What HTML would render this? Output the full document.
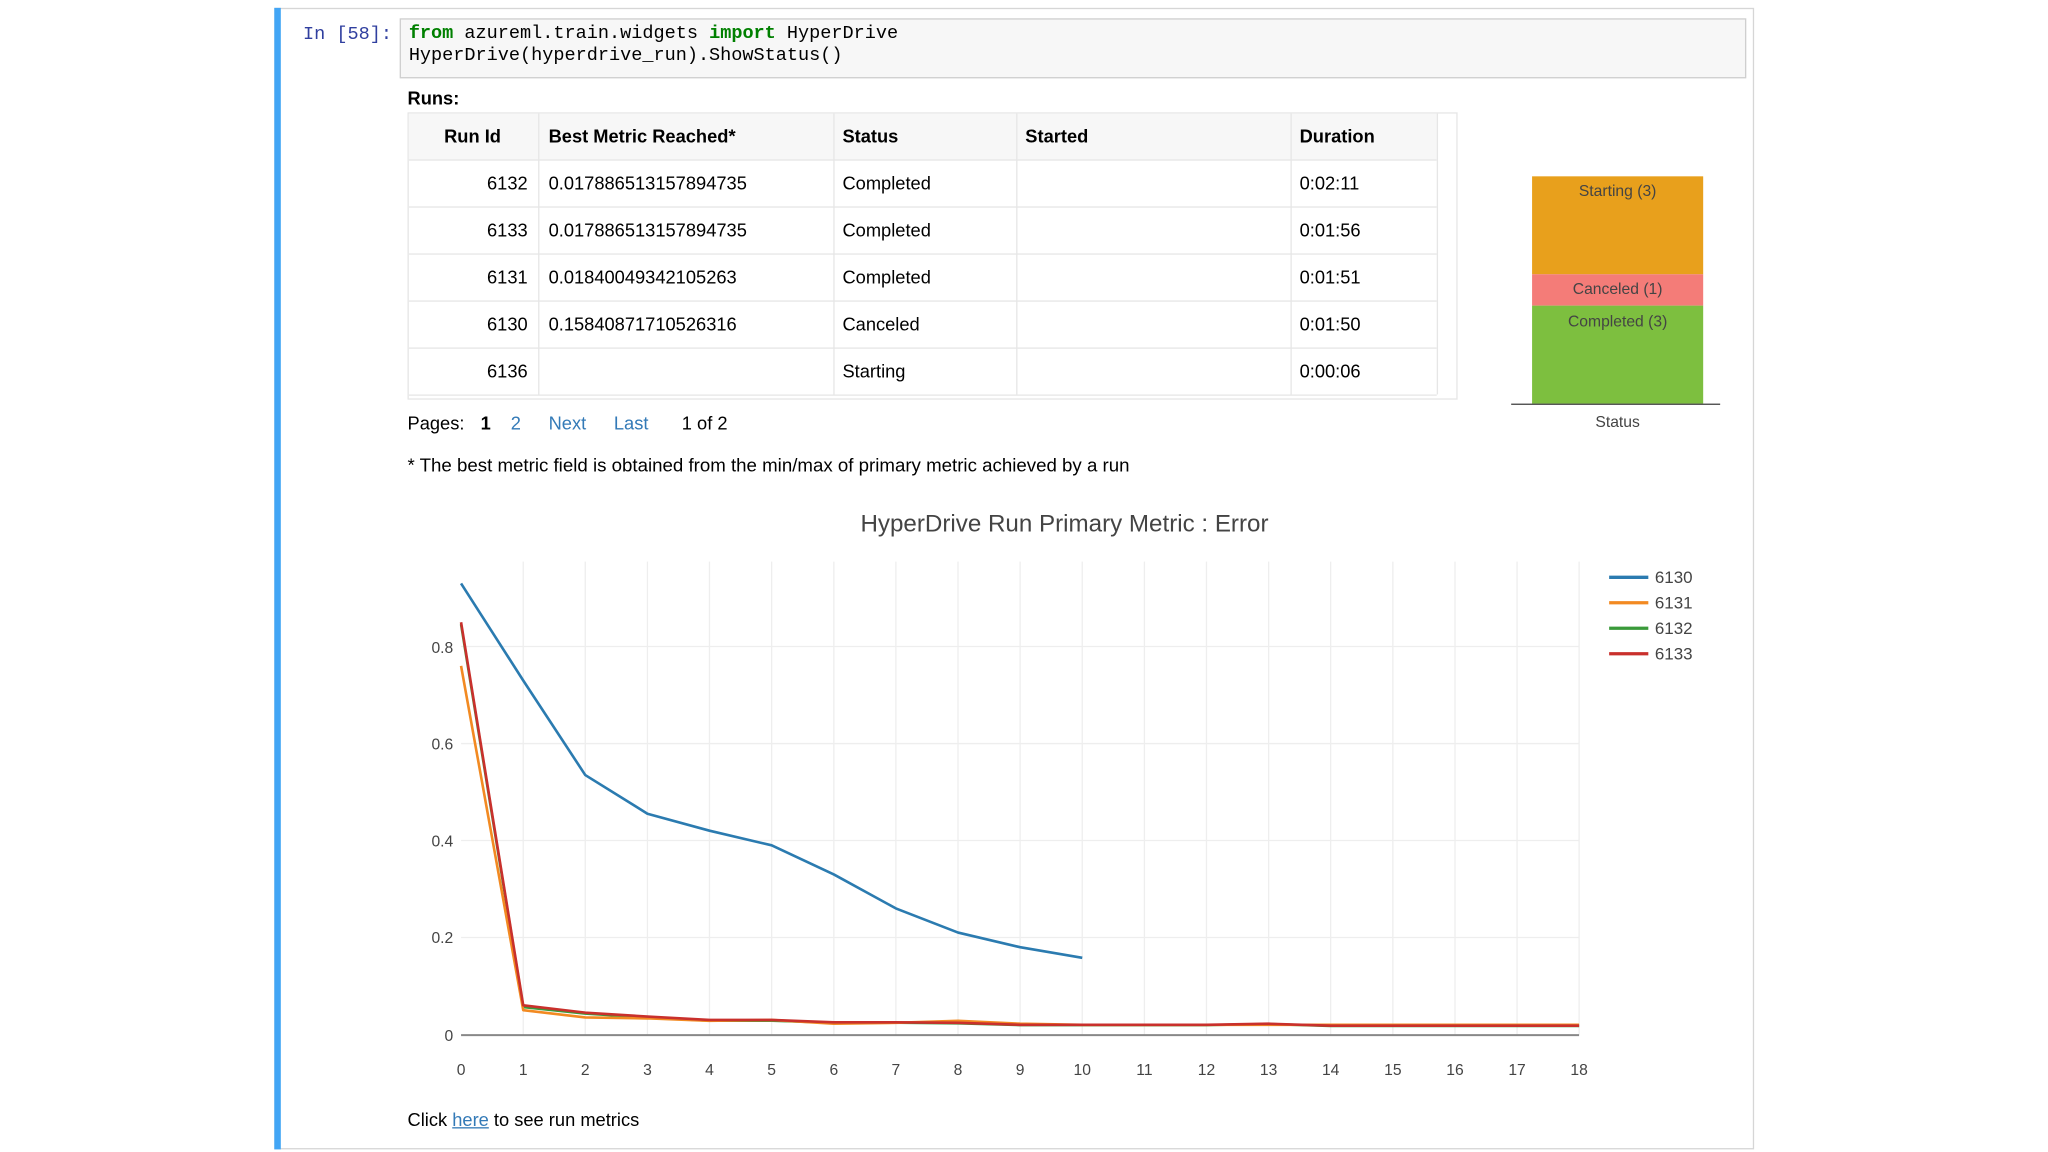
<!DOCTYPE html>
<html><head><meta charset="utf-8"><style>
html,body{margin:0;padding:0;background:#fff;width:2048px;height:1152px;overflow:hidden}
#s{position:absolute;left:0;top:0;width:1568px;height:882px;transform:scale(1.30612);transform-origin:0 0;font-family:"Liberation Sans",Arial,sans-serif;color:#000}
.a{position:absolute;white-space:nowrap}
.m{font-family:"Liberation Mono",monospace;font-size:14.2px}
.t{font-size:14px}
.hl{position:absolute;height:1px;background:#e6e6e6}
.vl{position:absolute;width:1px;background:#e6e6e6}
</style></head><body><div id="s">
<div class="a" style="left:210px;top:6px;width:1131px;height:872px;border:1px solid #d6d6d6"></div>
<div class="a" style="left:210px;top:6px;width:5px;height:874px;background:#42a5f5"></div>
<div class="a m" style="left:232px;top:19px;color:#303f9f">In [58]:</div>
<div class="a" style="left:306px;top:14px;width:1029px;height:44px;background:#f7f7f7;border:1px solid #cfcfcf"></div>
<div class="a m" style="left:313px;top:18px;line-height:17px">
<span style="color:#008000;font-weight:bold">from</span> azureml.train.widgets <span style="color:#008000;font-weight:bold">import</span> HyperDrive<br>HyperDrive(hyperdrive_run).ShowStatus()</div>
<div class="a t" style="left:312px;top:67px;font-weight:bold">Runs:</div>
<div class="a" style="left:312px;top:86px;width:802px;height:218px;border:1px solid #e6e6e6;background:#fff"></div>
<div class="a" style="left:313px;top:87px;width:787px;height:35px;background:#f7f7f7"></div>
<div class="hl" style="left:313px;top:122px;width:787px"></div>
<div class="hl" style="left:313px;top:158px;width:787px"></div>
<div class="hl" style="left:313px;top:194px;width:787px"></div>
<div class="hl" style="left:313px;top:230px;width:787px"></div>
<div class="hl" style="left:313px;top:266px;width:787px"></div>
<div class="hl" style="left:313px;top:302px;width:787px"></div>
<div class="vl" style="left:412px;top:87px;height:215px"></div>
<div class="vl" style="left:638px;top:87px;height:215px"></div>
<div class="vl" style="left:778px;top:87px;height:215px"></div>
<div class="vl" style="left:988px;top:87px;height:215px"></div>
<div class="vl" style="left:1100px;top:87px;height:215px"></div>
<div class="a t" style="left:340px;top:96px;font-weight:bold">Run Id</div>
<div class="a t" style="left:420px;top:96px;font-weight:bold">Best Metric Reached*</div>
<div class="a t" style="left:645px;top:96px;font-weight:bold">Status</div>
<div class="a t" style="left:785px;top:96px;font-weight:bold">Started</div>
<div class="a t" style="left:995px;top:96px;font-weight:bold">Duration</div>
<div class="a t" style="left:360px;width:44px;text-align:right;top:132px">6132</div>
<div class="a t" style="left:420px;top:132px">0.017886513157894735</div>
<div class="a t" style="left:645px;top:132px">Completed</div>
<div class="a t" style="left:995px;top:132px">0:02:11</div>
<div class="a t" style="left:360px;width:44px;text-align:right;top:168px">6133</div>
<div class="a t" style="left:420px;top:168px">0.017886513157894735</div>
<div class="a t" style="left:645px;top:168px">Completed</div>
<div class="a t" style="left:995px;top:168px">0:01:56</div>
<div class="a t" style="left:360px;width:44px;text-align:right;top:204px">6131</div>
<div class="a t" style="left:420px;top:204px">0.01840049342105263</div>
<div class="a t" style="left:645px;top:204px">Completed</div>
<div class="a t" style="left:995px;top:204px">0:01:51</div>
<div class="a t" style="left:360px;width:44px;text-align:right;top:240px">6130</div>
<div class="a t" style="left:420px;top:240px">0.15840871710526316</div>
<div class="a t" style="left:645px;top:240px">Canceled</div>
<div class="a t" style="left:995px;top:240px">0:01:50</div>
<div class="a t" style="left:360px;width:44px;text-align:right;top:276px">6136</div>
<div class="a t" style="left:645px;top:276px">Starting</div>
<div class="a t" style="left:995px;top:276px">0:00:06</div>
<div class="a t" style="left:312px;top:316px">Pages:</div>
<div class="a t" style="left:368px;top:316px;font-weight:bold">1</div>
<div class="a t" style="left:391px;top:316px;color:#337ab7">2</div>
<div class="a t" style="left:420px;top:316px;color:#337ab7">Next</div>
<div class="a t" style="left:470px;top:316px;color:#337ab7">Last</div>
<div class="a t" style="left:522px;top:316px">1 of 2</div>
<div class="a t" style="left:312px;top:349px;font-size:14.3px">* The best metric field is obtained from the min/max of primary metric achieved by a run</div>
<div class="a" style="left:1173px;top:135px;width:131px;height:75px;background:#e8a01c"></div>
<div class="a" style="left:1173px;top:210px;width:131px;height:24px;background:#f47c78"></div>
<div class="a" style="left:1173px;top:234px;width:131px;height:75px;background:#7dbf3f"></div>
<div class="a" style="left:1157px;top:309px;width:160px;height:1px;background:#444"></div>
<div class="a" style="left:1173px;width:131px;text-align:center;top:139px;font-size:12px;color:#444">Starting (3)</div>
<div class="a" style="left:1173px;width:131px;text-align:center;top:214px;font-size:12px;color:#444">Canceled (1)</div>
<div class="a" style="left:1173px;width:131px;text-align:center;top:239px;font-size:12px;color:#444">Completed (3)</div>
<div class="a" style="left:1173px;width:131px;text-align:center;top:316px;font-size:12px;color:#444">Status</div>
<svg class="a" style="left:0;top:0" width="1568" height="882" font-family="Liberation Sans, Arial, sans-serif">
<text x="815" y="407" text-anchor="middle" font-size="18.5" fill="#444">HyperDrive Run Primary Metric : Error</text>
<g stroke="#eeeeee" stroke-width="1">
<line x1="400.6" y1="430" x2="400.6" y2="792"/><line x1="448.1" y1="430" x2="448.1" y2="792"/><line x1="495.7" y1="430" x2="495.7" y2="792"/><line x1="543.2" y1="430" x2="543.2" y2="792"/><line x1="590.8" y1="430" x2="590.8" y2="792"/><line x1="638.4" y1="430" x2="638.4" y2="792"/><line x1="685.9" y1="430" x2="685.9" y2="792"/><line x1="733.5" y1="430" x2="733.5" y2="792"/><line x1="781" y1="430" x2="781" y2="792"/><line x1="828.6" y1="430" x2="828.6" y2="792"/><line x1="876.2" y1="430" x2="876.2" y2="792"/><line x1="923.7" y1="430" x2="923.7" y2="792"/><line x1="971.3" y1="430" x2="971.3" y2="792"/><line x1="1018.8" y1="430" x2="1018.8" y2="792"/><line x1="1066.4" y1="430" x2="1066.4" y2="792"/><line x1="1114" y1="430" x2="1114" y2="792"/><line x1="1161.5" y1="430" x2="1161.5" y2="792"/><line x1="1209" y1="430" x2="1209" y2="792"/>
<line x1="353" y1="495" x2="1209" y2="495"/><line x1="353" y1="569.3" x2="1209" y2="569.3"/><line x1="353" y1="643.5" x2="1209" y2="643.5"/><line x1="353" y1="717.8" x2="1209" y2="717.8"/>
</g>
<line x1="353" y1="792.5" x2="1209" y2="792.5" stroke="#888" stroke-width="1.5"/>
<g font-size="12" fill="#444" text-anchor="end">
<text x="347" y="797">0</text><text x="347" y="722">0.2</text><text x="347" y="648">0.4</text><text x="347" y="574">0.6</text><text x="347" y="500">0.8</text></g>
<g font-size="12" fill="#444" text-anchor="middle">
<text x="353" y="823">0</text><text x="400.6" y="823">1</text><text x="448.1" y="823">2</text><text x="495.7" y="823">3</text><text x="543.2" y="823">4</text><text x="590.8" y="823">5</text><text x="638.4" y="823">6</text><text x="685.9" y="823">7</text><text x="733.5" y="823">8</text><text x="781" y="823">9</text><text x="828.6" y="823">10</text><text x="876.2" y="823">11</text><text x="923.7" y="823">12</text><text x="971.3" y="823">13</text><text x="1018.8" y="823">14</text><text x="1066.4" y="823">15</text><text x="1114" y="823">16</text><text x="1161.5" y="823">17</text><text x="1209" y="823">18</text></g>
<g fill="none" stroke-width="2" stroke-linejoin="round">
<polyline stroke="#2b7bb0" points="353,446.7 400.6,521 448.1,593.4 495.7,623 543.2,636 590.8,647.2 638.4,669.5 685.9,695.5 733.5,714 781,725.2 828.6,733.3"/>
<polyline stroke="#3a9a3a" points="353,478 400.6,771 448.1,776 495.7,779 543.2,781.5 590.8,781.5 638.4,783 685.9,783 733.5,783.5 781,784.8 828.6,784.8 876.2,784.8 923.7,784.8 971.3,784 1018.8,785.5 1066.4,785.5 1114,785.5 1161.5,785.5 1209,785.5"/>
<polyline stroke="#f28a22" points="353,509.8 400.6,773.4 448.1,779 495.7,779.7 543.2,781.6 590.8,780.9 638.4,783.8 685.9,783.1 733.5,781.6 781,783.8 828.6,784.6 876.2,784.6 923.7,784.6 971.3,784.6 1018.8,784.6 1066.4,784.6 1114,784.6 1161.5,784.6 1209,784.6"/>
<polyline stroke="#c9302c" points="353,476.4 400.6,769.7 448.1,775.3 495.7,778.3 543.2,780.9 590.8,780.9 638.4,782.7 685.9,782.7 733.5,783.1 781,784.6 828.6,784.6 876.2,784.6 923.7,784.6 971.3,783.8 1018.8,785.3 1066.4,785.3 1114,785.3 1161.5,785.3 1209,785.3"/>
</g>
<g stroke-width="2.5"><line x1="1232" y1="442" x2="1262" y2="442" stroke="#2b7bb0"/><line x1="1232" y1="461.5" x2="1262" y2="461.5" stroke="#f28a22"/><line x1="1232" y1="481" x2="1262" y2="481" stroke="#3a9a3a"/><line x1="1232" y1="500.5" x2="1262" y2="500.5" stroke="#c9302c"/></g>
<g font-size="13" fill="#444"><text x="1267" y="446.5">6130</text><text x="1267" y="466">6131</text><text x="1267" y="485.5">6132</text><text x="1267" y="505">6133</text></g>
</svg>
<div class="a t" style="left:312px;top:849px">Click <span style="color:#337ab7;text-decoration:underline">here</span> to see run metrics</div>
</div></body></html>
